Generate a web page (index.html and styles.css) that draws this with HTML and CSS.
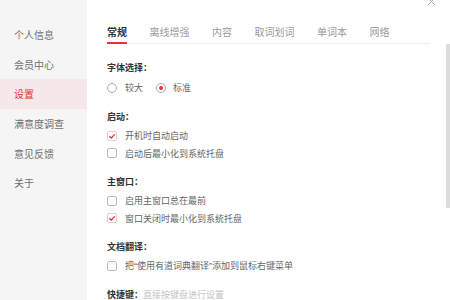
FILE: index.html
```html
<!DOCTYPE html>
<html lang="zh">
<head>
<meta charset="utf-8">
<link rel="stylesheet" href="styles.css">
</head>
<body>
<div class="app">
  <nav class="side">
    <div class="side-item">个人信息</div>
    <div class="side-item">会员中心</div>
    <div class="side-item active">设置</div>
    <div class="side-item">满意度调查</div>
    <div class="side-item">意见反馈</div>
    <div class="side-item">关于</div>
  </nav>
  <main class="main">
    <div class="tabs">
      <span class="tab active">常规</span>
      <span class="tab">离线增强</span>
      <span class="tab">内容</span>
      <span class="tab">取词划词</span>
      <span class="tab">单词本</span>
      <span class="tab">网络</span>
    </div>
    <div class="content">
      <section class="sec">
        <div class="label">字体选择：</div>
        <div class="row radios">
          <span class="radio"></span><span class="opt">较大</span>
          <span class="radio on"></span><span class="opt">标准</span>
        </div>
      </section>
      <section class="sec">
        <div class="label">启动：</div>
        <div class="row"><span class="cb on"><svg viewBox="0 0 10 10" width="10" height="10"><polyline points="2.3,5.2 4.3,7 7.8,3.4" fill="none" stroke="#e5333b" stroke-width="1.3"/></svg></span><span class="opt">开机时自动启动</span></div>
        <div class="row"><span class="cb"></span><span class="opt">启动后最小化到系统托盘</span></div>
      </section>
      <section class="sec">
        <div class="label">主窗口：</div>
        <div class="row"><span class="cb"></span><span class="opt">启用主窗口总在最前</span></div>
        <div class="row"><span class="cb on"><svg viewBox="0 0 10 10" width="10" height="10"><polyline points="2.3,5.2 4.3,7 7.8,3.4" fill="none" stroke="#e5333b" stroke-width="1.3"/></svg></span><span class="opt">窗口关闭时最小化到系统托盘</span></div>
      </section>
      <section class="sec">
        <div class="label">文档翻译：</div>
        <div class="row"><span class="cb"></span><span class="opt">把<span class="q">“</span>使用有道词典翻译<span class="q">”</span>添加到鼠标右键菜单</span></div>
      </section>
      <section class="sec">
        <div class="label">快捷键：<span class="hint">直接按键盘进行设置</span></div>
      </section>
    </div>
    <svg class="close" viewBox="0 0 10 10" width="9" height="9"><path d="M1 1 L9 9 M9 1 L1 9" stroke="#a0a0a0" stroke-width="1"/></svg>
    <div class="thumb"></div>
  </main>
</div>
</body>
</html>
```
FILE: styles.css
```css
* { box-sizing: border-box; }
html, body { margin: 0; padding: 0; }
body {
  width: 450px;
  height: 300px;
  overflow: hidden;
  background: #fff;
  font-family: "Noto Sans CJK SC", "Noto Sans", sans-serif;
}
.app {
  display: flex;
  height: 300px;
}
.side {
  width: 87px;
  flex: none;
  background: #f5f5f5;
  padding-top: 20.2px;
}
.side-item {
  height: 29.6px;
  line-height: 29.6px;
  padding-left: 14px;
  font-size: 10px;
  color: #707070;
}
.side-item.active {
  background: #f6e8e8;
  color: #e5333b;
}
.main {
  flex: 1;
  position: relative;
  padding: 0 20px 0 20px;
}
.tabs {
  display: flex;
  gap: 22.5px;
  padding-top: 25px;
  border-bottom: 1px solid #f0f0f0;
}
.tab {
  font-size: 10px;
  line-height: 14px;
  color: #999;
  padding-bottom: 3px;
  border-bottom: 2px solid transparent;
  margin-bottom: -1px;
}
.tab.active {
  color: #333;
  font-weight: bold;
  border-bottom-color: #e5333b;
}
.content {
  padding-top: 17px;
}
.sec + .sec { margin-top: 13px; }
.label {
  font-size: 9px;
  line-height: 14px;
  font-weight: bold;
  color: #333;
  margin-bottom: 3px;
}
.hint {
  font-weight: normal;
  color: #c4c4c4;
}
.row {
  display: flex;
  align-items: center;
  height: 17.5px;
}
.radios { height: 19px; }
.opt {
  font-size: 9px;
  color: #666;
  margin-left: 8px;
}
.q {
  font-family: "Liberation Sans", sans-serif;
}
.radio {
  width: 10px;
  height: 10px;
  border: 1px solid #aaa;
  border-radius: 50%;
  display: flex;
  align-items: center;
  justify-content: center;
  flex: none;
}
.radio.on::after {
  content: "";
  width: 4px;
  height: 4px;
  border-radius: 50%;
  background: #e5333b;
}
.radios .opt + .radio { margin-left: 13px; }
.radios .opt:last-child { margin-left: 7px; }
.cb {
  width: 10px;
  height: 10px;
  border: 1px solid #bbb;
  border-radius: 2px;
  flex: none;
  position: relative;
}
.cb.on { border-color: #d8d0d0; }
.cb svg {
  position: absolute;
  left: -1px;
  top: -1px;
}
.close {
  position: absolute;
  right: 14px;
  top: -3px;
}
.thumb {
  position: absolute;
  right: 0;
  top: 44px;
  width: 4px;
  height: 164px;
  background: #dcdcdc;
}
```
